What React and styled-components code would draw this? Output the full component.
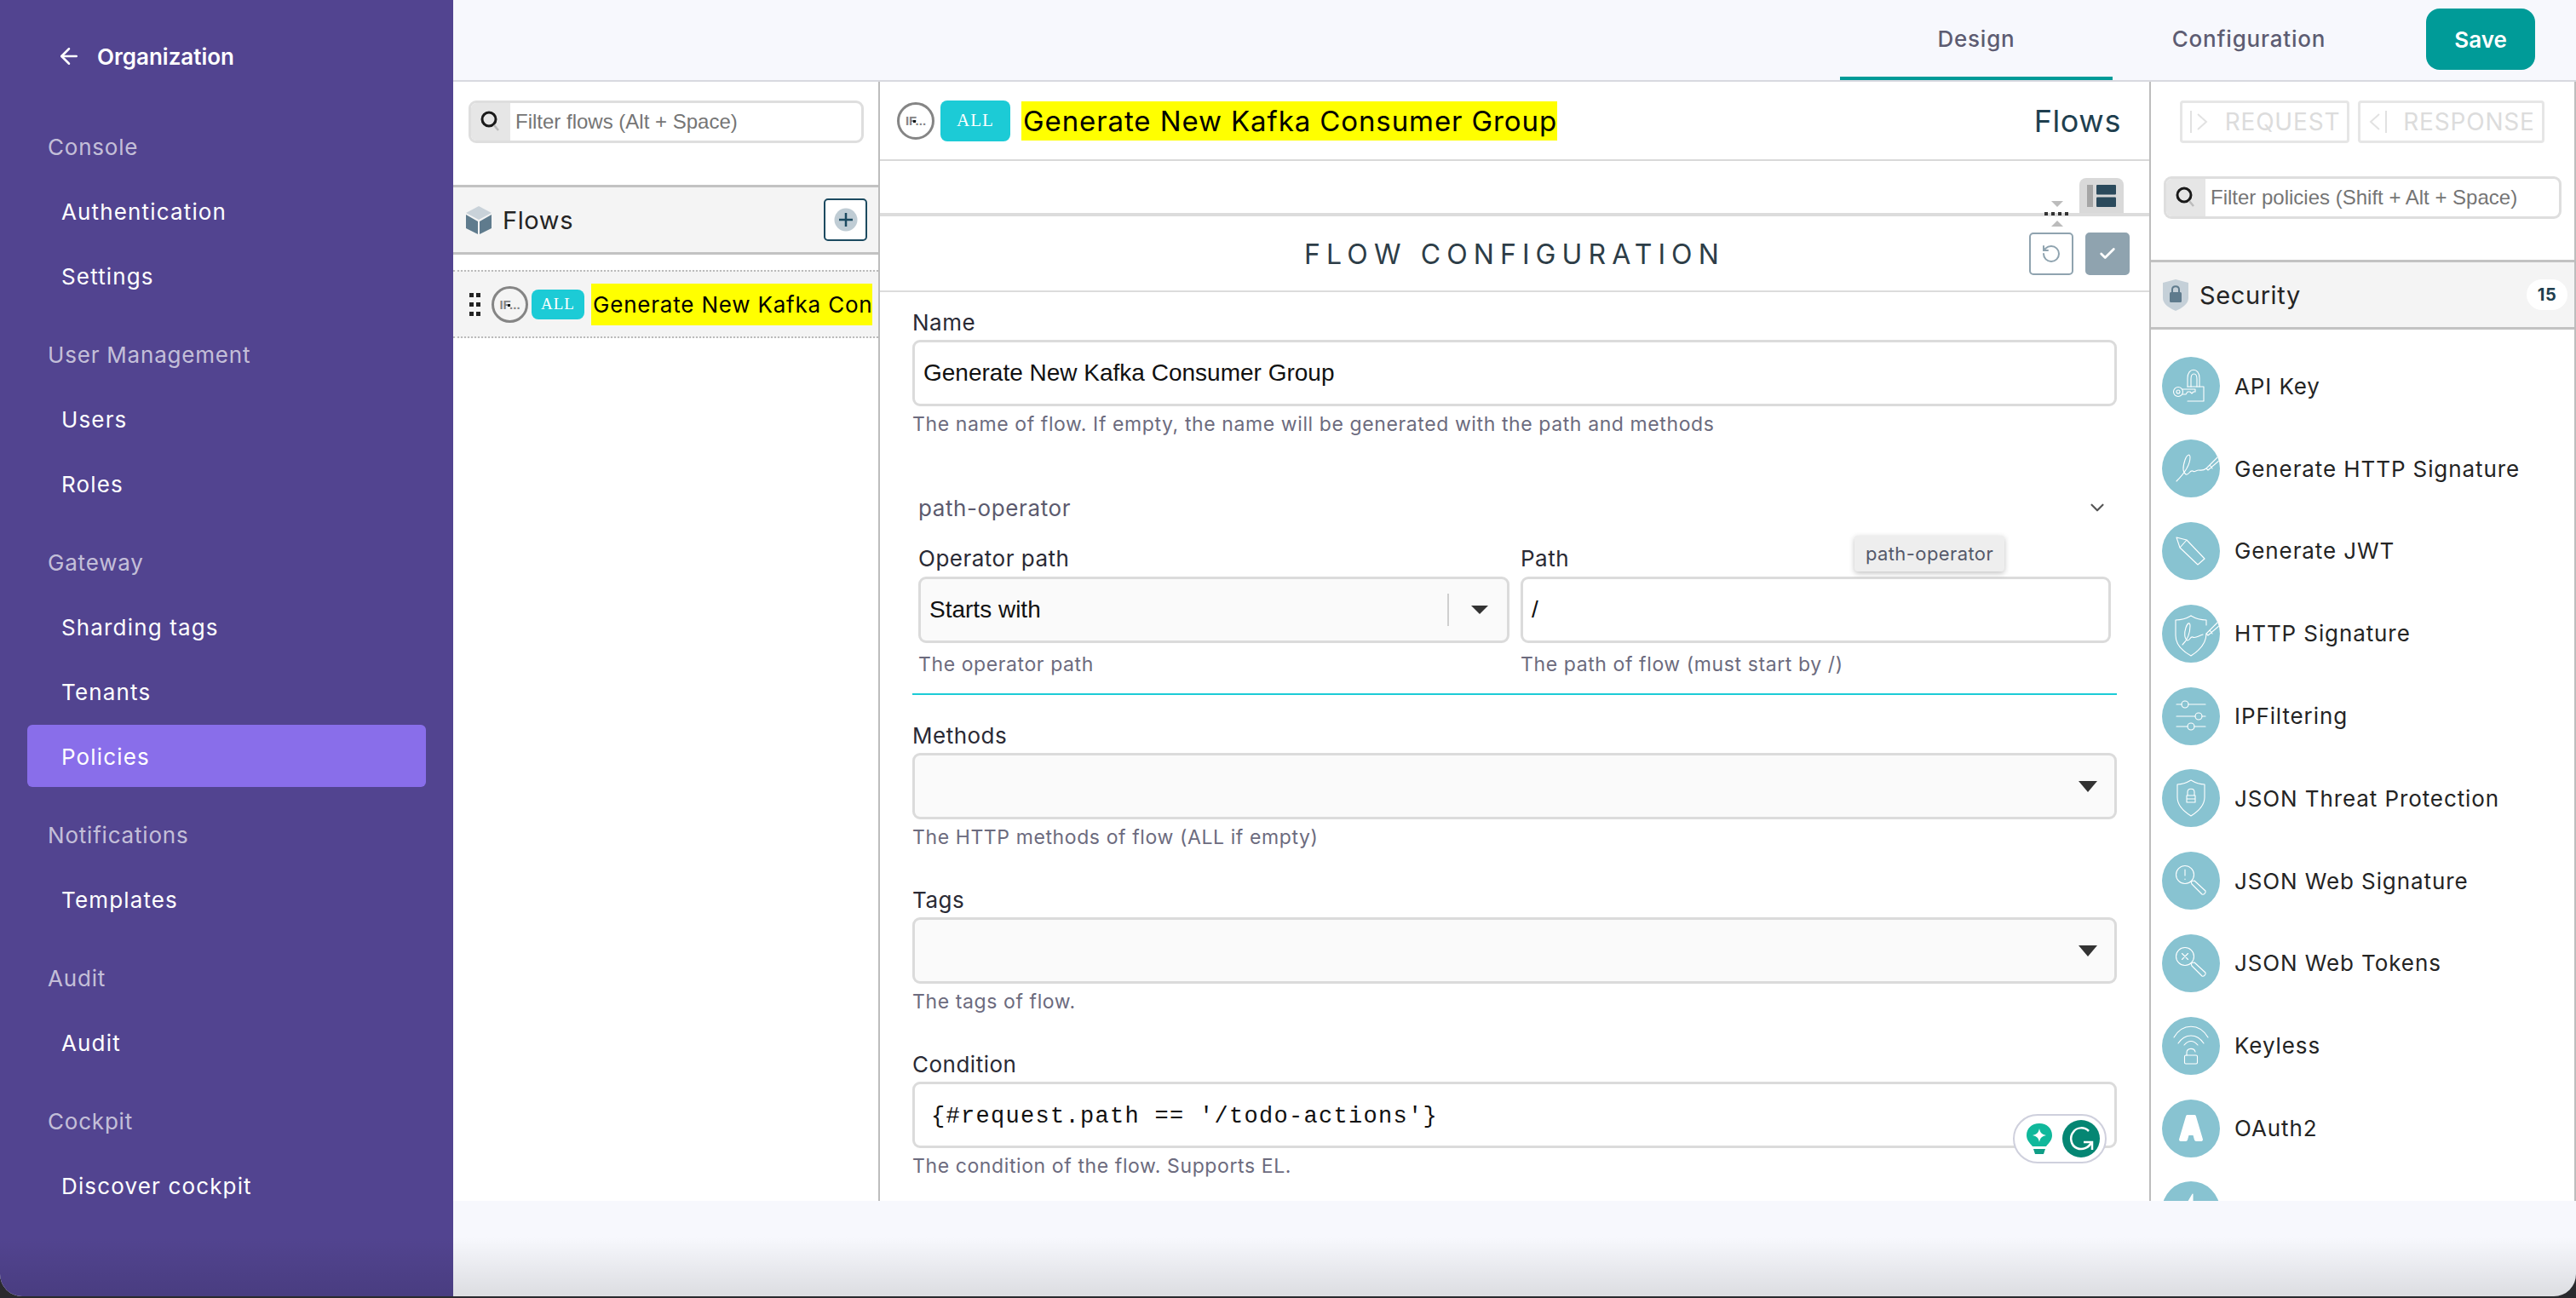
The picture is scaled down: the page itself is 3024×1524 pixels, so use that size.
import React from 'react';
import styled, { createGlobalStyle } from 'styled-components';
import { ArrowLeft, ChevronDown, Check, RotateCcw } from 'lucide-react';

const UI_FONT = 'Inter, "Noto Sans", sans-serif';
const ARIAL = '"Liberation Sans", Arial, sans-serif';
const MONO = '"Liberation Mono", "Courier New", monospace';

const GlobalStyle = createGlobalStyle`
  html, body {
    margin: 0;
    padding: 0;
    background: #2a2a2e;
  }
  * {
    box-sizing: border-box;
  }
`;

const Page = styled.div`
  position: relative;
  display: flex;
  width: 3024px;
  height: 1522px;
  overflow: hidden;
  border-radius: 0 0 26px 26px;
  font-family: ${UI_FONT};
  background: #f7f8fd;
  &::after {
    content: '';
    position: absolute;
    left: 0;
    right: 0;
    bottom: 0;
    height: 70px;
    background: linear-gradient(rgba(0, 0, 0, 0), rgba(0, 0, 0, 0.11));
    pointer-events: none;
  }
`;

const Sidebar = styled.nav`
  flex: 0 0 532px;
  background: #524490;
  color: #fff;
`;
const BackLink = styled.div`
  display: flex;
  align-items: center;
  gap: 18px;
  height: 132px;
  margin-bottom: 3px;
  padding-left: 66px;
  font-size: 26px;
  font-weight: 600;
`;
const NavSection = styled.div`
  margin-bottom: 19px;
`;
const NavTitle = styled.div`
  display: flex;
  align-items: center;
  height: 73px;
  margin-bottom: 3px;
  padding: 2px 0 0 56px;
  font-size: 26px;
  letter-spacing: 0.8px;
  color: rgba(255, 255, 255, 0.68);
`;
const NavItem = styled.div`
  display: flex;
  align-items: center;
  height: 73px;
  margin: 0 32px 3px;
  padding: 2px 0 0 40px;
  border-radius: 6px;
  font-size: 26px;
  letter-spacing: 1.15px;
  background: ${({ $active }) => ($active ? '#896eea' : 'transparent')};
`;

const Main = styled.div`
  flex: 1;
  display: flex;
  flex-direction: column;
  min-width: 0;
`;
const TopBar = styled.header`
  flex-shrink: 0;
  display: flex;
  align-items: stretch;
  justify-content: flex-end;
  height: 96px;
  padding-right: 48px;
  border-bottom: 2px solid #d8d9e0;
`;
const Tab = styled.div`
  display: flex;
  align-items: center;
  justify-content: center;
  width: 320px;
  height: 94px;
  padding-top: 1px;
  font-size: 26px;
  font-weight: 500;
  letter-spacing: 0.8px;
  color: #5d5c72;
  border-bottom: ${({ $active }) => ($active ? '4px solid #009b98' : '4px solid transparent')};
`;
const SaveButton = styled.button`
  align-self: flex-start;
  width: 128px;
  height: 72px;
  margin: 10px 0 0 48px;
  border: none;
  border-radius: 16px;
  background: #009b98;
  color: #fff;
  font-family: ${UI_FONT};
  font-size: 26px;
  font-weight: 600;
`;

const Workspace = styled.div`
  flex-shrink: 0;
  display: flex;
  height: 1314px;
  background: #fff;
  overflow: hidden;
`;
const FlowsPanel = styled.section`
  flex: 0 0 501px;
  border-right: 2px solid #bdbdbd;
`;
const FilterArea = styled.div`
  height: 121px;
  padding: 22px 17px 0 18px;
`;
const Filter = styled.div`
  display: flex;
  height: 50px;
  border: 3px solid #dedede;
  border-radius: 9px;
  overflow: hidden;
  font-family: ${ARIAL};
  font-size: 24px;
  color: #757575;
`;
const FilterIcon = styled.span`
  flex: 0 0 46px;
  display: flex;
  align-items: center;
  justify-content: center;
  background: #e6e6e6;
`;
const FilterText = styled.span`
  padding-left: 6px;
  line-height: 44px;
  white-space: nowrap;
`;
const SectionHead = styled.div`
  display: flex;
  align-items: center;
  height: 82px;
  padding: 0 ${({ $compact }) => ($compact ? '8px 0 14px' : '13px 0 15px')};
  background: #f4f4f4;
  border-top: 3px solid #c2c2c2;
  border-bottom: 3px solid #c2c2c2;
  font-size: 29px;
  letter-spacing: 0.6px;
  color: #242424;
`;
const SectionName = styled.span`
  flex: 1;
  margin-left: 13px;
`;
const AddButton = styled.button`
  display: flex;
  align-items: center;
  justify-content: center;
  width: 51px;
  height: 50px;
  padding: 0;
  background: #fff;
  border: 2px solid #1c4a60;
  border-radius: 5px;
`;
const FlowRow = styled.div`
  display: flex;
  align-items: center;
  height: 80px;
  margin-top: 18px;
  padding-left: 19px;
  overflow: hidden;
  background: #f4f4f4;
  border-top: 2px dotted #bbb;
  border-bottom: 2px dotted #bbb;
`;
const Grip = styled.span`
  display: grid;
  grid-template-columns: 5px 5px;
  gap: 6px 3px;
  margin-right: 13px;
  i {
    width: 5px;
    height: 5px;
    background: #222;
  }
`;
const Condition = styled.span`
  position: relative;
  flex: 0 0 ${({ $big }) => ($big ? '44px' : '43px')};
  display: flex;
  align-items: center;
  justify-content: center;
  height: ${({ $big }) => ($big ? '44px' : '43px')};
  border: 3px solid #858585;
  border-radius: 50%;
  font-family: ${ARIAL};
  font-size: 15px;
  font-weight: 700;
  color: #858585;
  &::after {
    content: '';
    position: absolute;
    left: 16px;
    top: 18px;
    width: 3px;
    height: 3px;
    background: #111;
  }
`;
const MethodBadge = styled.span`
  flex: 0 0 auto;
  display: flex;
  align-items: center;
  justify-content: center;
  width: ${({ $big }) => ($big ? '82px' : '62px')};
  height: ${({ $big }) => ($big ? '48px' : '35px')};
  margin: 0 ${({ $big }) => ($big ? '13px' : '8px')} 0 ${({ $big }) => ($big ? '7px' : '4px')};
  border-radius: 8px;
  background: #1ccbd6;
  color: #fff;
  font-family: "Liberation Serif", serif;
  font-size: ${({ $big }) => ($big ? '21px' : '19px')};
  letter-spacing: 1px;
`;
const Highlight = styled.span`
  flex: 0 0 auto;
  display: block;
  width: ${({ $clip }) => ($clip ? '330px' : 'auto')};
  height: ${({ $clip }) => ($clip ? '49px' : '46px')};
  padding-left: 2px;
  overflow: hidden;
  background: #ffff00;
  color: #000;
  white-space: nowrap;
  font-size: ${({ $clip }) => ($clip ? '26px' : '33px')};
  line-height: ${({ $clip }) => ($clip ? '49px' : '46px')};
  letter-spacing: ${({ $clip }) => ($clip ? '0.8px' : '0.9px')};
`;

const CenterPanel = styled.section`
  position: relative;
  flex: 0 0 1490px;
  display: flex;
  flex-direction: column;
  & > * {
    flex-shrink: 0;
  }
`;
const FlowTitleBar = styled.div`
  display: flex;
  align-items: center;
  height: 93px;
  padding: 0 33px 0 20px;
  border-bottom: 2px solid #d9d9d9;
`;
const FlowsLabel = styled.span`
  margin-left: auto;
  font-size: 36px;
  letter-spacing: 0.6px;
  color: #1f3f4f;
`;
const ToggleStrip = styled.div`
  display: flex;
  justify-content: flex-end;
  align-items: flex-end;
  height: 61px;
  padding-right: 30px;
`;
const ToggleTab = styled.div`
  display: flex;
  align-items: center;
  justify-content: center;
  width: 52px;
  height: 41px;
  background: #d9d9d9;
  border-radius: 8px 8px 0 0;
`;
const Splitter = styled.div`
  position: relative;
  height: 4px;
  background: #dcdcdc;
`;
const SplitterGrip = styled.div`
  position: absolute;
  left: 1366px;
  top: -14px;
  display: flex;
  flex-direction: column;
  align-items: center;
  gap: 6px;
  width: 32px;
`;
const Triangle = styled.i`
  width: 0;
  height: 0;
  border-left: 7px solid transparent;
  border-right: 7px solid transparent;
  ${({ $up }) => ($up ? 'border-bottom: 7px solid #bcbcbc;' : 'border-top: 7px solid #bcbcbc;')}
`;
const GripDots = styled.i`
  width: 30px;
  height: 4px;
  background: repeating-linear-gradient(90deg, #333 0 4px, transparent 4px 8px);
`;
const ConfigHead = styled.div`
  display: grid;
  grid-template-columns: 1fr auto 1fr;
  align-items: center;
  height: 89px;
  border-bottom: 2px solid #dcdcdc;
`;
const ConfigTitle = styled.h2`
  grid-column: 2;
  margin: 0;
  padding-top: 2px;
  font-size: 32px;
  font-weight: 400;
  letter-spacing: 7.1px;
  color: #2d3d47;
`;
const ConfigActions = styled.div`
  display: flex;
  justify-content: flex-end;
  gap: 14px;
  padding-right: 23px;
`;
const IconButton = styled.button`
  display: flex;
  align-items: center;
  justify-content: center;
  width: 52px;
  height: 50px;
  padding: 0;
  border: 2px solid #8fa3af;
  border-radius: 5px;
  background: ${({ $filled }) => ($filled ? '#8fa3af' : '#fff')};
  color: ${({ $filled }) => ($filled ? '#fff' : '#8fa3af')};
`;
const Form = styled.div`
  position: relative;
  padding: 20px 38px 0;
`;
const Field = styled.div`
  margin-bottom: ${({ $gap }) => $gap || 44}px;
`;
const Label = styled.div`
  height: 30px;
  margin-bottom: 6px;
  font-size: 26px;
  line-height: 32px;
  letter-spacing: 0.5px;
  color: #2a2a35;
`;
const Box = styled.div`
  display: flex;
  align-items: center;
  height: 78px;
  padding: 0 10px;
  border: 3px solid #dbdbdb;
  border-radius: 9px;
  background: ${({ $filled }) => ($filled ? '#fafafa' : '#fff')};
  font-family: ${({ $mono }) => ($mono ? MONO : ARIAL)};
  font-size: 28px;
  color: #111;
  ${({ $mono }) => $mono && 'font-size: 27px; letter-spacing: 1.3px; padding: 4px 0 0 19px;'}
`;
const Hint = styled.div`
  height: 28px;
  margin-top: 7px;
  font-size: 23px;
  line-height: 28px;
  letter-spacing: 0.6px;
  color: #6c6b7e;
`;
const Arrow = styled.i`
  width: 0;
  height: 0;
  margin-left: auto;
  margin-right: 10px;
  border-left: 11px solid transparent;
  border-right: 11px solid transparent;
  border-top: 13px solid #333;
`;
const SelectDivider = styled.i`
  width: 2px;
  height: 38px;
  margin-left: auto;
  background: #cfcfcf;
`;
const SmallArrow = styled(Arrow)`
  margin: 0 12px 0 26px;
  border-left-width: 10px;
  border-right-width: 10px;
  border-top-width: 10px;
`;
const GroupHead = styled.div`
  display: flex;
  align-items: center;
  justify-content: space-between;
  height: 30px;
  padding: 0 10px 0 7px;
  font-size: 26px;
  letter-spacing: 0.6px;
  color: #5b5a6e;
`;
const OperatorGrid = styled.div`
  display: grid;
  grid-template-columns: 694px 693px;
  column-gap: 13px;
  margin-top: 29px;
  padding-left: 7px;
`;
const TealRule = styled.div`
  height: 2px;
  margin: 20px 0 32px;
  background: #1ccbd6;
`;
const OpLabel = styled(Label)`
  margin-bottom: 7px;
`;
const OpHint = styled(Hint)`
  margin-top: 11px;
`;
const Tooltip = styled.div`
  position: absolute;
  left: 1144px;
  top: 286px;
  display: flex;
  align-items: center;
  justify-content: center;
  width: 176px;
  height: 42px;
  border-radius: 4px;
  background: #eeeeee;
  box-shadow: 0 2px 6px rgba(0, 0, 0, 0.25);
  font-size: 22px;
  letter-spacing: 0.4px;
  color: #55596a;
`;
const GrammarlyPill = styled.div`
  position: absolute;
  left: 1330px;
  top: 965px;
  display: flex;
  align-items: center;
  justify-content: space-between;
  width: 110px;
  height: 58px;
  padding: 0 6px 0 14px;
  background: #fff;
  border: 2px solid #cfd0dd;
  border-radius: 29px;
`;

const PoliciesPanel = styled.section`
  flex: 1;
  border-left: 2px solid #bdbdbd;
  border-right: 2px solid #bdbdbd;
  min-width: 0;
`;
const PhaseButtons = styled.div`
  display: flex;
  gap: 10px;
  height: 88px;
  padding: 22px 0 0 34px;
`;
const PhaseButton = styled.div`
  display: flex;
  align-items: center;
  justify-content: center;
  gap: 18px;
  width: ${({ $wide }) => ($wide ? '219px' : '199px')};
  height: 50px;
  border: 3px solid #e6e6e6;
  border-radius: 4px;
  font-size: 28px;
  letter-spacing: 0.8px;
  color: #dcdcdc;
`;
const PolicyFilterArea = styled.div`
  height: 121px;
  padding: 23px 15px 0 15px;
`;
const CountBadge = styled.span`
  display: flex;
  align-items: center;
  justify-content: center;
  width: 48px;
  height: 36px;
  border-radius: 18px;
  background: #fff;
  font-size: 20px;
  font-weight: 700;
  color: #1f3f4f;
`;
const PolicyList = styled.div`
  padding: 18px 0 0 13px;
`;
const PolicyRow = styled.div`
  display: flex;
  align-items: center;
  gap: 17px;
  height: 96.8px;
  font-size: 26px;
  letter-spacing: 0.9px;
  color: #242424;
`;
const PolicyIcon = styled.svg`
  flex: 0 0 68px;
  width: 68px;
  height: 68px;
  border-radius: 50%;
  background: #88c3d1;
  fill: none;
  stroke: #fff;
  stroke-width: 1.1;
  stroke-linecap: round;
  stroke-linejoin: round;
`;
const PhaseGlyph = styled.svg`
  flex: 0 0 24px;
  fill: none;
  stroke: #e2e2e2;
  stroke-width: 2;
  transform: ${({ $flip }) => ($flip ? 'scaleX(-1)' : 'none')};
`;
const Footer = styled.div`
  flex: 1;
`;

const navigation = [
  { title: 'Console', items: ['Authentication', 'Settings'] },
  { title: 'User Management', items: ['Users', 'Roles'] },
  { title: 'Gateway', items: ['Sharding tags', 'Tenants', 'Policies'] },
  { title: 'Notifications', items: ['Templates'] },
  { title: 'Audit', items: ['Audit'] },
  { title: 'Cockpit', items: ['Discover cockpit'] },
];

const signature = 'M17 49C25 41 33 30 33 21C33 16 29 18 27 24C25 30 23 38 28 41C32 42 32 36 36 37C38 39 40 36 43 36C46 36 48 37 52 34';
const signaturePen = 'M52 34L66 20M54 36L68 24M52 34L54 36M56 30L59 34';

const policies = [
  {
    name: 'API Key',
    icon: (
      <>
        <path d="M30 35V25C30 12 44 12 44 25V35M34 35V26C34 18 41 18 41 26V35" />
        <path d="M30 35H49V52H30" />
        <circle cx="19" cy="41" r="5.5" />
        <circle cx="19" cy="41" r="2" />
        <path d="M24 38H39V41H37L35 43L33 41H30L28 44H24" />
      </>
    ),
  },
  {
    name: 'Generate HTTP Signature',
    icon: (
      <>
        <path d={signature} />
        <path d={signaturePen} />
      </>
    ),
  },
  {
    name: 'Generate JWT',
    icon: <path d="M17 18L29 21L50 43L42 50L21 30ZM21 30L29 21" />,
  },
  {
    name: 'HTTP Signature',
    icon: (
      <>
        <path d="M34 13C29 16 22 18 16 18V36C16 47 25 55 34 60C42 55 52 47 52 34" />
        <path d="M34 13C39 16 46 18 52 18V24" />
        <path d="M24 47C30 41 33 32 33 25C33 20 30 21 28 27C26 33 26 40 30 42C33 42 33 37 36 38C39 40 42 37 48 35" />
        <path d={signaturePen} />
      </>
    ),
  },
  {
    name: 'IPFiltering',
    icon: (
      <>
        <path d="M17 20H23M31 20H51M17 34H39M47 34H51M17 46H30M38 46H51" />
        <circle cx="27" cy="20" r="4" />
        <circle cx="43" cy="34" r="4" />
        <circle cx="34" cy="46" r="4" />
      </>
    ),
  },
  {
    name: 'JSON Threat Protection',
    icon: (
      <>
        <path d="M34 13C29 16 24 18 18 18V33C18 43 26 50 34 55C42 50 50 43 50 33V18C44 18 39 16 34 13Z" />
        <path d="M29 31H39V39H29ZM30 31V27C30 22 38 22 38 27V31M29 35H39" />
      </>
    ),
  },
  {
    name: 'JSON Web Signature',
    icon: (
      <>
        <circle cx="27" cy="27" r="10.5" />
        <path d="M34 35L38 34L51 46C52 48 49 51 47 50L35 38ZM27 21V28M27 32V32.5" />
      </>
    ),
  },
  {
    name: 'JSON Web Tokens',
    icon: (
      <>
        <circle cx="27" cy="26" r="10.5" />
        <path d="M34 34L38 33L51 45C52 47 49 50 47 49L35 37ZM23.5 22.5L30.5 29.5M30.5 22.5L23.5 29.5" />
      </>
    ),
  },
  {
    name: 'Keyless',
    icon: (
      <>
        <path d="M14 24C24 7 44 7 54 24M19 31C27 19 41 19 49 31M26 33C31 27 37 27 42 33" />
        <rect x="26.5" y="45" width="15" height="10" rx="1.5" />
        <path d="M29 45V42C29 36 38 36 39 41" />
      </>
    ),
  },
  {
    name: 'OAuth2',
    icon: (
      <path
        d="M30 20H38L46 47H40L38 40H30L28 47H22ZM31.500 33H36.500L34 24Z"
        fill="#fff"
        strokeWidth="4"
      />
    ),
  },
  {
    name: '',
    icon: <path d="M36 15L26 32H36Z" fill="#fff" />,
  },
];

const SearchGlyph = () => (
  <svg width="24" height="28" viewBox="0 0 24 28" fill="none">
    <circle cx="10" cy="11" r="8" stroke="#1a1a1a" strokeWidth="3" />
    <path d="M16 18L21 24" stroke="#bcbcbc" strokeWidth="2.500" />
  </svg>
);

const CubeGlyph = () => (
  <svg width="30" height="33" viewBox="0 0 30 33">
    <path d="M15 0L30 8L15 16L0 8Z" fill="#c9d2d9" />
    <path d="M0 10L14 18V33L0 26Z" fill="#5f7b8d" />
    <path d="M30 10L16 18V33L30 26Z" fill="#5f7b8d" />
  </svg>
);

const ShieldGlyph = () => (
  <svg width="30" height="37" viewBox="0 0 30 37">
    <path d="M15 0L30 4V22C30 29 22 34 15 37C8 34 0 29 0 22V4Z" fill="#c5d0d8" />
    <rect x="8" y="15" width="14" height="12" rx="1.500" fill="#5f7b8d" />
    <path d="M11 15V12C11 7 19 7 19 12V15" fill="none" stroke="#5f7b8d" strokeWidth="2" />
  </svg>
);

const PlusGlyph = () => (
  <svg width="28" height="28" viewBox="0 0 28 28">
    <circle cx="14" cy="14" r="13.500" fill="#bfccd4" />
    <path d="M14 6V22M6 14H22" stroke="#1c4a60" strokeWidth="2.500" />
  </svg>
);

const LayoutGlyph = () => (
  <svg width="34" height="26" viewBox="0 0 34 26">
    <rect x="0" y="0" width="7" height="26" fill="#a5a5a5" />
    <rect x="11" y="0" width="23" height="11.500" rx="1" fill="#2b4a5c" />
    <rect x="11" y="14.500" width="23" height="11.500" rx="1" fill="#2b4a5c" />
  </svg>
);

const GrammarlyGlyphs = () => (
  <>
    <svg width="30" height="36" viewBox="0 0 30 36">
      <path d="M15 0C6 0 0 6 0 14C0 20 4 23 7 27H23C26 23 30 20 30 14C30 6 24 0 15 0Z" fill="#10b89b" />
      <path d="M15 6C16 11 18 13 23 14C18 15 16 17 15 22C14 17 12 15 7 14C12 13 14 11 15 6Z" fill="#fff" />
      <path d="M8 30H22L20 36H10Z" fill="#0f9e86" />
    </svg>
    <svg width="44" height="44" viewBox="0 0 44 44" fill="none">
      <circle cx="22" cy="22" r="22" fill="#058673" />
      <path d="M31 13C26 8 17 8 13 14C8 20 10 30 17 33C24 36 32 32 34 26" stroke="#fff" strokeWidth="2.500" />
      <path d="M25 26H35V35" stroke="#fff" strokeWidth="2.500" />
    </svg>
  </>
);

const App = () => (
  <Page>
    <GlobalStyle />
    <Sidebar>
      <BackLink>
        <ArrowLeft size={30} strokeWidth={2} />
        Organization
      </BackLink>
      {navigation.map((section) => (
        <NavSection key={section.title}>
          <NavTitle>{section.title}</NavTitle>
          {section.items.map((item) => (
            <NavItem key={item} $active={item === 'Policies'}>
              {item}
            </NavItem>
          ))}
        </NavSection>
      ))}
    </Sidebar>
    <Main>
      <TopBar>
        <Tab $active>Design</Tab>
        <Tab>Configuration</Tab>
        <SaveButton>Save</SaveButton>
      </TopBar>
      <Workspace>
        <FlowsPanel>
          <FilterArea>
            <Filter>
              <FilterIcon>
                <SearchGlyph />
              </FilterIcon>
              <FilterText>Filter flows (Alt + Space)</FilterText>
            </Filter>
          </FilterArea>
          <SectionHead>
            <CubeGlyph />
            <SectionName>Flows</SectionName>
            <AddButton>
              <PlusGlyph />
            </AddButton>
          </SectionHead>
          <FlowRow>
            <Grip>
              {[0, 1, 2, 3, 4, 5].map((dot) => (
                <i key={dot} />
              ))}
            </Grip>
            <Condition>IF...</Condition>
            <MethodBadge>ALL</MethodBadge>
            <Highlight $clip>Generate New Kafka Consumer Group</Highlight>
          </FlowRow>
        </FlowsPanel>
        <CenterPanel>
          <FlowTitleBar>
            <Condition $big>IF...</Condition>
            <MethodBadge $big>ALL</MethodBadge>
            <Highlight>Generate New Kafka Consumer Group</Highlight>
            <FlowsLabel>Flows</FlowsLabel>
          </FlowTitleBar>
          <ToggleStrip>
            <ToggleTab>
              <LayoutGlyph />
            </ToggleTab>
          </ToggleStrip>
          <Splitter>
            <SplitterGrip>
              <Triangle />
              <GripDots />
              <Triangle $up />
            </SplitterGrip>
          </Splitter>
          <ConfigHead>
            <ConfigTitle>FLOW CONFIGURATION</ConfigTitle>
            <ConfigActions>
              <IconButton>
                <RotateCcw size={24} strokeWidth={2} />
              </IconButton>
              <IconButton $filled>
                <Check size={22} strokeWidth={3} />
              </IconButton>
            </ConfigActions>
          </ConfigHead>
          <Form>
            <Field $gap={69}>
              <Label>Name</Label>
              <Box>Generate New Kafka Consumer Group</Box>
              <Hint>The name of flow. If empty, the name will be generated with the path and methods</Hint>
            </Field>
            <GroupHead>
              path-operator
              <ChevronDown size={26} strokeWidth={2} color="#555" />
            </GroupHead>
            <OperatorGrid>
              <div>
                <OpLabel>Operator path</OpLabel>
                <Box $filled>
                  Starts with
                  <SelectDivider />
                  <SmallArrow />
                </Box>
                <OpHint>The operator path</OpHint>
              </div>
              <div>
                <OpLabel>Path</OpLabel>
                <Box>/</Box>
                <OpHint>The path of flow (must start by /)</OpHint>
              </div>
            </OperatorGrid>
            <TealRule />
            <Field>
              <Label>Methods</Label>
              <Box $filled>
                <Arrow />
              </Box>
              <Hint>The HTTP methods of flow (ALL if empty)</Hint>
            </Field>
            <Field>
              <Label>Tags</Label>
              <Box $filled>
                <Arrow />
              </Box>
              <Hint>The tags of flow.</Hint>
            </Field>
            <Field>
              <Label>Condition</Label>
              <Box $mono>{"{#request.path == '/todo-actions'}"}</Box>
              <Hint>The condition of the flow. Supports EL.</Hint>
            </Field>
            <Tooltip>path-operator</Tooltip>
            <GrammarlyPill>
              <GrammarlyGlyphs />
            </GrammarlyPill>
          </Form>
        </CenterPanel>
        <PoliciesPanel>
          <PhaseButtons>
            <PhaseButton>
              <PhaseGlyph width="24" height="30" viewBox="0 0 24 30">
                <path d="M2 2V28M10 6L20 15L10 24" />
              </PhaseGlyph>
              REQUEST
            </PhaseButton>
            <PhaseButton $wide>
              <PhaseGlyph $flip width="24" height="30" viewBox="0 0 24 30">
                <path d="M2 2V28M10 6L20 15L10 24" />
              </PhaseGlyph>
              RESPONSE
            </PhaseButton>
          </PhaseButtons>
          <PolicyFilterArea>
            <Filter>
              <FilterIcon>
                <SearchGlyph />
              </FilterIcon>
              <FilterText>Filter policies (Shift + Alt + Space)</FilterText>
            </Filter>
          </PolicyFilterArea>
          <SectionHead $compact>
            <ShieldGlyph />
            <SectionName>Security</SectionName>
            <CountBadge>15</CountBadge>
          </SectionHead>
          <PolicyList>
            {policies.map((policy) => (
              <PolicyRow key={policy.name || 'clipped'}>
                <PolicyIcon viewBox="0 0 68 68">{policy.icon}</PolicyIcon>
                {policy.name}
              </PolicyRow>
            ))}
          </PolicyList>
        </PoliciesPanel>
      </Workspace>
      <Footer />
    </Main>
  </Page>
);

export default App;
